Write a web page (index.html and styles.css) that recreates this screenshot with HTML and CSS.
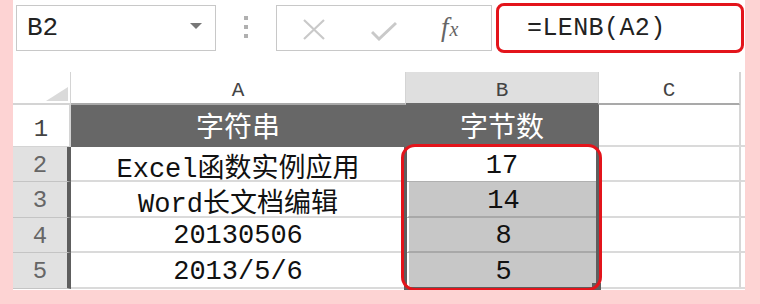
FILE: index.html
```html
<!DOCTYPE html>
<html lang="zh-CN">
<head>
<meta charset="UTF-8">
<title>LENB</title>
<link rel="stylesheet" href="styles.css">
</head>
<body>
<div class="sheet">
    <div class="toolbar">
        <div class="namebox">
            <span class="name">B2</span>
            <span class="caret"></span>
        </div>
        <div class="grip"><i></i><i></i><i></i></div>
        <div class="fnbox">
            <svg class="icon-x" width="24" height="21" viewBox="0 0 24 21">
                <path d="M2 1 L22 20 M22 1 L2 20" stroke="#c9c9c9" stroke-width="2.2" fill="none"/>
            </svg>
            <svg class="icon-ok" width="26" height="20" viewBox="0 0 26 20">
                <path d="M1 11 L8 18 L25 2" stroke="#c9c9c9" stroke-width="3" fill="none"/>
            </svg>
            <span class="fx"><i>f</i><em>x</em></span>
        </div>
        <div class="formula">=LENB(A2)</div>
    </div>

    <div class="grid">
        <!-- column headers -->
        <div class="corner">
            <svg width="22" height="14" viewBox="0 0 22 14"><path d="M22 0 L22 14 L0 14 Z" fill="#dadada"/></svg>
        </div>
        <div class="colhead">A</div>
        <div class="colhead active">B</div>
        <div class="colhead">C</div>
        <div class="colhead edge"></div>

        <!-- row 1 -->
        <div class="rowhead">1</div>
        <div class="cell title">字符串</div>
        <div class="cell title">字节数</div>
        <div class="cell"></div>
        <div class="cell edge"></div>

        <!-- row 2 -->
        <div class="rowhead sel">2</div>
        <div class="cell">Excel函数实例应用</div>
        <div class="cell current">
            17
            <div class="selection"></div>
            <div class="ring"></div>
        </div>
        <div class="cell"></div>
        <div class="cell edge"></div>

        <!-- row 3 -->
        <div class="rowhead sel">3</div>
        <div class="cell">Word长文档编辑</div>
        <div class="cell hl">14</div>
        <div class="cell"></div>
        <div class="cell edge"></div>

        <!-- row 4 -->
        <div class="rowhead sel">4</div>
        <div class="cell">20130506</div>
        <div class="cell hl">8</div>
        <div class="cell"></div>
        <div class="cell edge"></div>

        <!-- row 5 -->
        <div class="rowhead sel">5</div>
        <div class="cell">2013/5/6</div>
        <div class="cell hl">5</div>
        <div class="cell"></div>
        <div class="cell edge"></div>
    </div>
</div>
</body>
</html>
```

FILE: styles.css
```css
body {
    margin: 0;
    padding: 0;
    background-color: #fdd3d3; /* pink frame */
    font-family: "Liberation Mono", "Noto Sans CJK SC", monospace;
}
.sheet {
    margin-left: 13px;
    width: 732px;
    height: 290px;
    background-color: #fff;
}
.toolbar {
    height: 72px;
    display: flex;
    align-items: flex-start;
    padding-top: 5px;
    box-sizing: border-box;
}
.namebox {
    margin-left: 3px;
    width: 200px;
    height: 46px;
    border: 1px solid #c8c8c8;
    box-sizing: border-box;
    display: flex;
    align-items: center;
    justify-content: space-between;
    padding: 0 13px 0 10px;
}
.name {
    font-size: 26px;
    color: #222;
}
.caret {
    width: 0;
    height: 0;
    border-left: 6px solid transparent;
    border-right: 6px solid transparent;
    border-top: 6px solid #777;
    margin-top: -4px;
}
.grip {
    margin-left: 28px;
    margin-top: 11px;
    display: flex;
    flex-direction: column;
    gap: 5px;
}
.grip i {
    display: block;
    width: 4px;
    height: 4px;
    background-color: #b0b0b0;
}
.fnbox {
    margin-left: 28px;
    width: 216px;
    height: 46px;
    border: 1px solid #c8c8c8;
    box-sizing: border-box;
    display: flex;
    align-items: center;
}
.icon-x {
    margin-left: 25px;
    margin-top: 2px;
}
.icon-ok {
    margin-left: 45px;
    margin-top: 6px;
}
.fx {
    margin-left: 44px;
    font-family: "Liberation Serif", serif;
    color: #666;
    font-size: 27px;
    margin-top: -2px;
}
.fx em {
    font-size: 20px;
    margin-left: 1px;
}
.formula {
    margin-left: 4px;
    margin-top: -2px;
    width: 248px;
    height: 50px;
    border: 3px solid #e3141b;
    border-radius: 8px;
    box-sizing: border-box;
    display: flex;
    align-items: center;
    padding-left: 28px;
    font-size: 25px;
    letter-spacing: 0.4px;
    color: #222;
}

/* spreadsheet grid */
.grid {
    display: grid;
    grid-template-columns: 58px 335px 193px 141px 5px;
    grid-template-rows: 33px 42px 35px 36px 35px 36px;
}
.grid > div {
    box-sizing: border-box;
}
.corner {
    border-right: 1px solid #d4d4d4;
    border-bottom: 2px solid #d4d4d4;
    display: flex;
    align-items: flex-end;
    justify-content: flex-end;
    padding: 0 2px 2px 0;
}
.colhead {
    border-right: 1px solid #d4d4d4;
    border-bottom: 2px solid #a9a9a9;
    display: flex;
    align-items: center;
    justify-content: center;
    font-size: 21px;
    color: #444;
    padding-top: 5px;
}
.colhead.active {
    background-color: #dfdfdf;
    border-bottom-color: #6a6a6a;
}
.colhead.edge {
    border: none;
    border-left: 1px solid #d4d4d4;
}
.rowhead {
    border-right: 2px solid #d4d4d4;
    border-bottom: 1px solid #d4d4d4;
    display: flex;
    align-items: center;
    justify-content: center;
    font-size: 24px;
    color: #444;
    padding-top: 8px;
}
.rowhead.sel {
    background-color: #e1e1e1;
    border-right: 4px solid #5e5e5e;
    border-bottom-color: #c4c4c4;
    color: #666;
    padding-top: 2px;
}
.cell {
    border-right: 1px solid #d6d6d6;
    border-bottom: 2px solid #dadada;
    display: flex;
    align-items: center;
    justify-content: center;
    font-size: 27px;
    color: #111;
    white-space: nowrap;
    padding-top: 3px;
}
.cell.edge {
    border-right: none;
    border-left: 1px solid #d6d6d6;
}
.cell.title {
    background-color: #676767;
    border-color: #676767;
    color: #fff;
    font-family: "Noto Sans CJK SC", sans-serif;
    font-size: 28px;
    padding-top: 0;
}
.cell.current {
    position: relative;
    border-bottom: 1px solid #b0b0b0;
}
.cell.hl {
    background-color: #c7c7c7;
    border-left: 3px solid #fff;
    border-right: 1px solid #c7c7c7;
    border-bottom: 2px solid #a8a8a8;
}
/* selection frame over B2:B5 */
.selection {
    position: absolute;
    top: 0;
    left: -2px;
    right: -1px;
    height: 143px;
    border: 3px solid #5e5e5e;
    border-top: none;
    box-sizing: border-box;
}
/* fill handle */
.selection::after {
    content: "";
    position: absolute;
    right: -5px;
    bottom: -3px;
    width: 9px;
    height: 7px;
    background-color: #5e5e5e;
}
/* red annotation ring */
.ring {
    position: absolute;
    top: -3px;
    left: -5px;
    right: -4px;
    height: 147px;
    border: 3px solid #e3141b;
    border-radius: 14px;
    box-sizing: border-box;
}
```
